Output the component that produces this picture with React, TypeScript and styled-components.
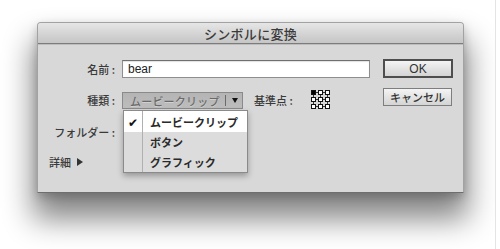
import styled, { createGlobalStyle } from 'styled-components';

const GlobalStyle = createGlobalStyle`
	html, body {
		margin: 0;
		padding: 0;
		background: #ffffff;
	}
	body {
		font-family: "Noto Sans CJK JP", "Noto Sans", sans-serif;
		color: #333;
	}
`;

const Page = styled.div`
	width: 496px;
	height: 249px;
	border-right: 1px solid #e4e4e4;
	padding: 22px 0 0 37px;
	box-sizing: border-box;
	overflow: hidden;
`;

const Dialog = styled.div`
	width: 427px;
	height: 171px;
	box-sizing: border-box;
	border: 1px solid #a2a2a2;
	border-bottom-color: #6e6e6e;
	border-radius: 4px 4px 0 0;
	background: #d8d8d8;
	box-shadow:
		0 22px 30px 4px rgba(0, 0, 0, 0.48),
		0 4px 10px rgba(0, 0, 0, 0.2);
	display: flex;
	flex-direction: column;
`;

const TitleBar = styled.div`
	height: 20px;
	border-radius: 3px 3px 0 0;
	background: linear-gradient(180deg, #e6e6e6 0%, #d2d2d2 60%, #c6c6c6 100%);
	border-bottom: 1px solid #7c7c7c;
	display: flex;
	align-items: center;
	justify-content: center;
	font-size: 13px;
	font-weight: 500;
	color: #3a3a3a;
	letter-spacing: 0.3px;
`;

const Body = styled.div`
	flex: 1;
	border-top: 1px solid #bdbdbd;
	display: flex;
	padding: 14px 10px 0 0;
`;

const Form = styled.div`
	flex: 1;
	display: flex;
	flex-direction: column;
`;

const Row = styled.div<{ $h: number; $mt: number }>`
	height: ${({ $h }) => $h}px;
	margin-top: ${({ $mt }) => $mt}px;
	display: flex;
	align-items: center;
`;

const Label = styled.div`
	width: 77px;
	padding-right: 7px;
	box-sizing: content-box;
	text-align: right;
	font-size: 11px;
	font-weight: 500;
	color: #3a3a3a;
	white-space: nowrap;
`;

const TextInput = styled.div`
	width: 248px;
	height: 18px;
	box-sizing: border-box;
	background: #fff;
	border: 1px solid #8e8e8e;
	border-top-color: #6f6f6f;
	box-shadow: inset 0 1px 1px rgba(0, 0, 0, 0.12);
	font-family: "Liberation Sans", "Noto Sans", sans-serif;
	font-size: 12px;
	color: #222;
	padding-left: 5px;
	line-height: 16px;
`;

const SelectWrap = styled.div`
	position: relative;
	height: 17px;
	align-self: flex-start;
	margin-top: 3px;
`;

const Select = styled.div`
	width: 121px;
	height: 17px;
	box-sizing: border-box;
	border: 1px solid #8a8a8a;
	background: linear-gradient(180deg, #b4b4b4, #bdbdbd);
	display: flex;
	align-items: center;
`;

const SelectText = styled.span`
	flex: 1;
	padding-left: 7px;
	font-size: 11px;
	font-weight: 500;
	color: #6a6a6a;
	text-shadow: 0 1px 0 rgba(255, 255, 255, 0.35);
	white-space: nowrap;
	letter-spacing: 0.2px;
`;

const SelectArrow = styled.span`
	width: 16px;
	height: 11px;
	border-left: 1px solid #6a6a6a;
	display: flex;
	align-items: center;
	justify-content: center;
	&::after {
		content: '';
		border-left: 3.5px solid transparent;
		border-right: 3.5px solid transparent;
		border-top: 5px solid #111;
		margin-left: 1px;
	}
`;

const Menu = styled.div`
	position: absolute;
	top: 18px;
	left: 1px;
	width: 125px;
	height: 63px;
	box-sizing: border-box;
	background: #dcdcdc;
	border: 1px solid #8a8a8a;
	box-shadow: 0 3px 6px rgba(0, 0, 0, 0.3);
	display: flex;
	flex-direction: column;
	z-index: 2;
`;

const MenuItem = styled.div<{ $active?: boolean }>`
	height: 20px;
	display: flex;
	align-items: center;
	background: ${({ $active }) => ($active ? '#ffffff' : 'transparent')};
	&:first-child {
		height: 21px;
	}
`;

const Check = styled.span`
	width: 19px;
	height: 100%;
	box-sizing: border-box;
	border-right: 1px solid #b0b0b0;
	display: flex;
	align-items: center;
	justify-content: center;
	font-size: 12px;
	color: #111;
`;

const ItemText = styled.span`
	padding-left: 7px;
	font-size: 11px;
	font-weight: 700;
	color: #2a2a2a;
	white-space: nowrap;
`;

const PivotLabel = styled.span`
	margin-left: 11px;
	font-size: 11px;
	font-weight: 500;
	color: #3a3a3a;
	white-space: nowrap;
`;

const PivotIcon = styled.svg`
	margin-left: 17px;
	display: block;
`;

const Details = styled.div`
	padding-left: 11px;
	display: flex;
	align-items: center;
	gap: 6px;
	font-size: 11px;
	font-weight: 500;
	color: #3a3a3a;
	&::after {
		content: '';
		border-top: 4px solid transparent;
		border-bottom: 4px solid transparent;
		border-left: 6px solid #333;
	}
`;

const ButtonColumn = styled.div`
	width: 70px;
	margin-left: 13px;
	display: flex;
	flex-direction: column;
`;

const Button = styled.div<{ $primary?: boolean }>`
	height: ${({ $primary }) => ($primary ? 19 : 18)}px;
	width: ${({ $primary }) => ($primary ? 70 : 69)}px;
	margin-top: ${({ $primary }) => ($primary ? 0 : 10)}px;
	box-sizing: border-box;
	border: ${({ $primary }) => ($primary ? '2px solid #4e4e4e' : '1px solid #7e7e7e')};
	background: linear-gradient(180deg, #f4f4f4 0%, #e2e2e2 55%, #d4d4d4 100%);
	display: flex;
	align-items: center;
	justify-content: center;
	font-size: 11px;
	font-weight: 500;
	color: #333;
	white-space: nowrap;
`;

const OkText = styled.span`
	font-family: "Liberation Sans", "Noto Sans", sans-serif;
	font-size: 12px;
	font-weight: 400;
	color: #333;
`;

function Pivot() {
	const pos = [1.5, 8.5, 15.5];
	return (
		<PivotIcon width="21" height="21" viewBox="0 0 21 21">
			{pos.map((y) => (
				<line key={`h${y}`} x1={pos[0] + 2} y1={y + 2} x2={pos[2] + 2} y2={y + 2} stroke="#333" strokeWidth="1" />
			))}
			{pos.map((x) => (
				<line key={`v${x}`} x1={x + 2} y1={pos[0] + 2} x2={x + 2} y2={pos[2] + 2} stroke="#333" strokeWidth="1" />
			))}
			{pos.map((y) =>
				pos.map((x) => (
					<rect
						key={`${x}-${y}`}
						x={x}
						y={y}
						width="4"
						height="4"
						fill={x === pos[0] && y === pos[0] ? '#000' : '#fff'}
						stroke="#111"
						strokeWidth="1"
					/>
				))
			)}
		</PivotIcon>
	);
}

export default function App() {
	return (
		<>
			<GlobalStyle />
			<Page>
				<Dialog>
					<TitleBar>シンボルに変換</TitleBar>
					<Body>
						<Form>
							<Row $h={19} $mt={0}>
								<Label>名前 :</Label>
								<TextInput>bear</TextInput>
							</Row>
							<Row $h={21} $mt={11}>
								<Label>種類 :</Label>
								<SelectWrap>
									<Select>
										<SelectText>ムービークリップ</SelectText>
										<SelectArrow />
									</Select>
									<Menu>
										<MenuItem $active>
											<Check>✔</Check>
											<ItemText>ムービークリップ</ItemText>
										</MenuItem>
										<MenuItem>
											<Check />
											<ItemText>ボタン</ItemText>
										</MenuItem>
										<MenuItem>
											<Check />
											<ItemText>グラフィック</ItemText>
										</MenuItem>
									</Menu>
								</SelectWrap>
								<PivotLabel>基準点 :</PivotLabel>
								<Pivot />
							</Row>
							<Row $h={20} $mt={12}>
								<Label>フォルダー :</Label>
							</Row>
							<Row $h={20} $mt={10}>
								<Details>詳細</Details>
							</Row>
						</Form>
						<ButtonColumn>
							<Button $primary>
								<OkText>OK</OkText>
							</Button>
							<Button>キャンセル</Button>
						</ButtonColumn>
					</Body>
				</Dialog>
			</Page>
		</>
	);
}
